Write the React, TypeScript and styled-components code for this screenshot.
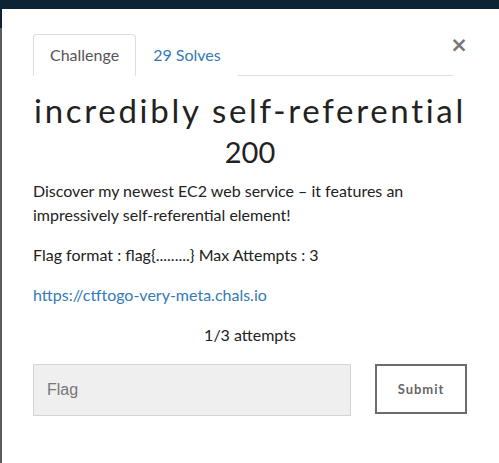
import React from "react";
import styled, { createGlobalStyle } from "styled-components";

const Global = createGlobalStyle`
  html, body { margin: 0; padding: 0; }
  body {
    width: 499px;
    height: 463px;
    overflow: hidden;
    background: linear-gradient(to bottom, #0c2434 0, #0c2434 28px, #5b5b5b 28px);
    font-family: Lato, "Open Sans", sans-serif;
  }
`;

const Modal = styled.div`
  margin: 9px 0 0 2px;
  height: 454px;
  background: #fff;
  padding: 25px 32px 0 31px;
  box-sizing: border-box;
  color: #333;
`;

const Header = styled.div`
  display: flex;
  align-items: flex-start;
`;

const Tabs = styled.div`
  flex: 1;
  display: flex;
  border-bottom: 1px solid #ddd;
`;

const Tab = styled.div<{ $active?: boolean }>`
  padding: 10px 16px;
  margin-bottom: -1px;
  font-size: 16px;
  line-height: 20px;
  border: 1px solid ${(p) => (p.$active ? "#ddd" : "transparent")};
  border-bottom-color: ${(p) => (p.$active ? "#fff" : "transparent")};
  border-radius: 4px 4px 0 0;
  color: ${(p) => (p.$active ? "#555" : "#337ab7")};
  background: #fff;
`;

const Close = styled.button`
  border: 0;
  background: none;
  padding: 0;
  margin: 1px 2px 0 0;
  width: 12px;
  font-family: "DejaVu Sans", sans-serif;
  font-size: 21px;
  font-weight: bold;
  line-height: 20px;
  color: #777;
  display: flex;
  justify-content: center;
`;

const Title = styled.h2`
  margin: 14px 0 0;
  text-align: center;
  font-family: Lato, sans-serif;
  font-weight: 400;
  font-size: 33px;
  line-height: 40px;
  letter-spacing: 2.7px;
  white-space: nowrap;
  color: #222;
`;

const Value = styled.h3`
  margin: 5px 0 0;
  text-align: center;
  font-weight: 400;
  font-size: 29px;
  line-height: 34px;
  color: #222;
`;

const Body = styled.div`
  margin-top: 10px;
  font-size: 16px;
  line-height: 24px;
  color: #222;
`;

const Para = styled.p`
  margin: 0 0 16px;
`;

const Link = styled.a`
  color: #337ab7;
  text-decoration: none;
`;

const Attempts = styled.p`
  margin: 0;
  text-align: center;
`;

const FormRow = styled.div`
  display: flex;
  align-items: flex-start;
  gap: 24px;
  margin-top: 17px;
`;

const Input = styled.input`
  flex: 1;
  height: 52px;
  box-sizing: border-box;
  background: #efefef;
  border: 1px solid #d4d4d4;
  padding: 0 13px;
  font-family: "Liberation Sans", Arial, sans-serif;
  font-size: 16px;
  color: #333;
  outline: none;
  &::placeholder { color: #777; }
`;

const Submit = styled.button`
  width: 92px;
  height: 50px;
  box-sizing: border-box;
  background: #fff;
  border: 2px solid #6c6c6c;
  font-family: Lato, sans-serif;
  font-weight: bold;
  font-size: 13px;
  letter-spacing: 1px;
  color: #666;
  padding: 0;
`;

export default function App() {
  return (
    <>
      <Global />
      <Modal>
        <Header>
          <Tabs>
            <Tab $active>Challenge</Tab>
            <Tab>29 Solves</Tab>
          </Tabs>
          <Close>×</Close>
        </Header>
        <Title>incredibly self-referential</Title>
        <Value>200</Value>
        <Body>
          <Para>
            Discover my newest EC2 web service – it features an impressively
            self-referential element!
          </Para>
          <Para>Flag format : flag{"{.........}"} Max Attempts : 3</Para>
          <Para>
            <Link href="#">https://ctftogo-very-meta.chals.io</Link>
          </Para>
          <Attempts>1/3 attempts</Attempts>
        </Body>
        <FormRow>
          <Input placeholder="Flag" />
          <Submit>Submit</Submit>
        </FormRow>
      </Modal>
    </>
  );
}
